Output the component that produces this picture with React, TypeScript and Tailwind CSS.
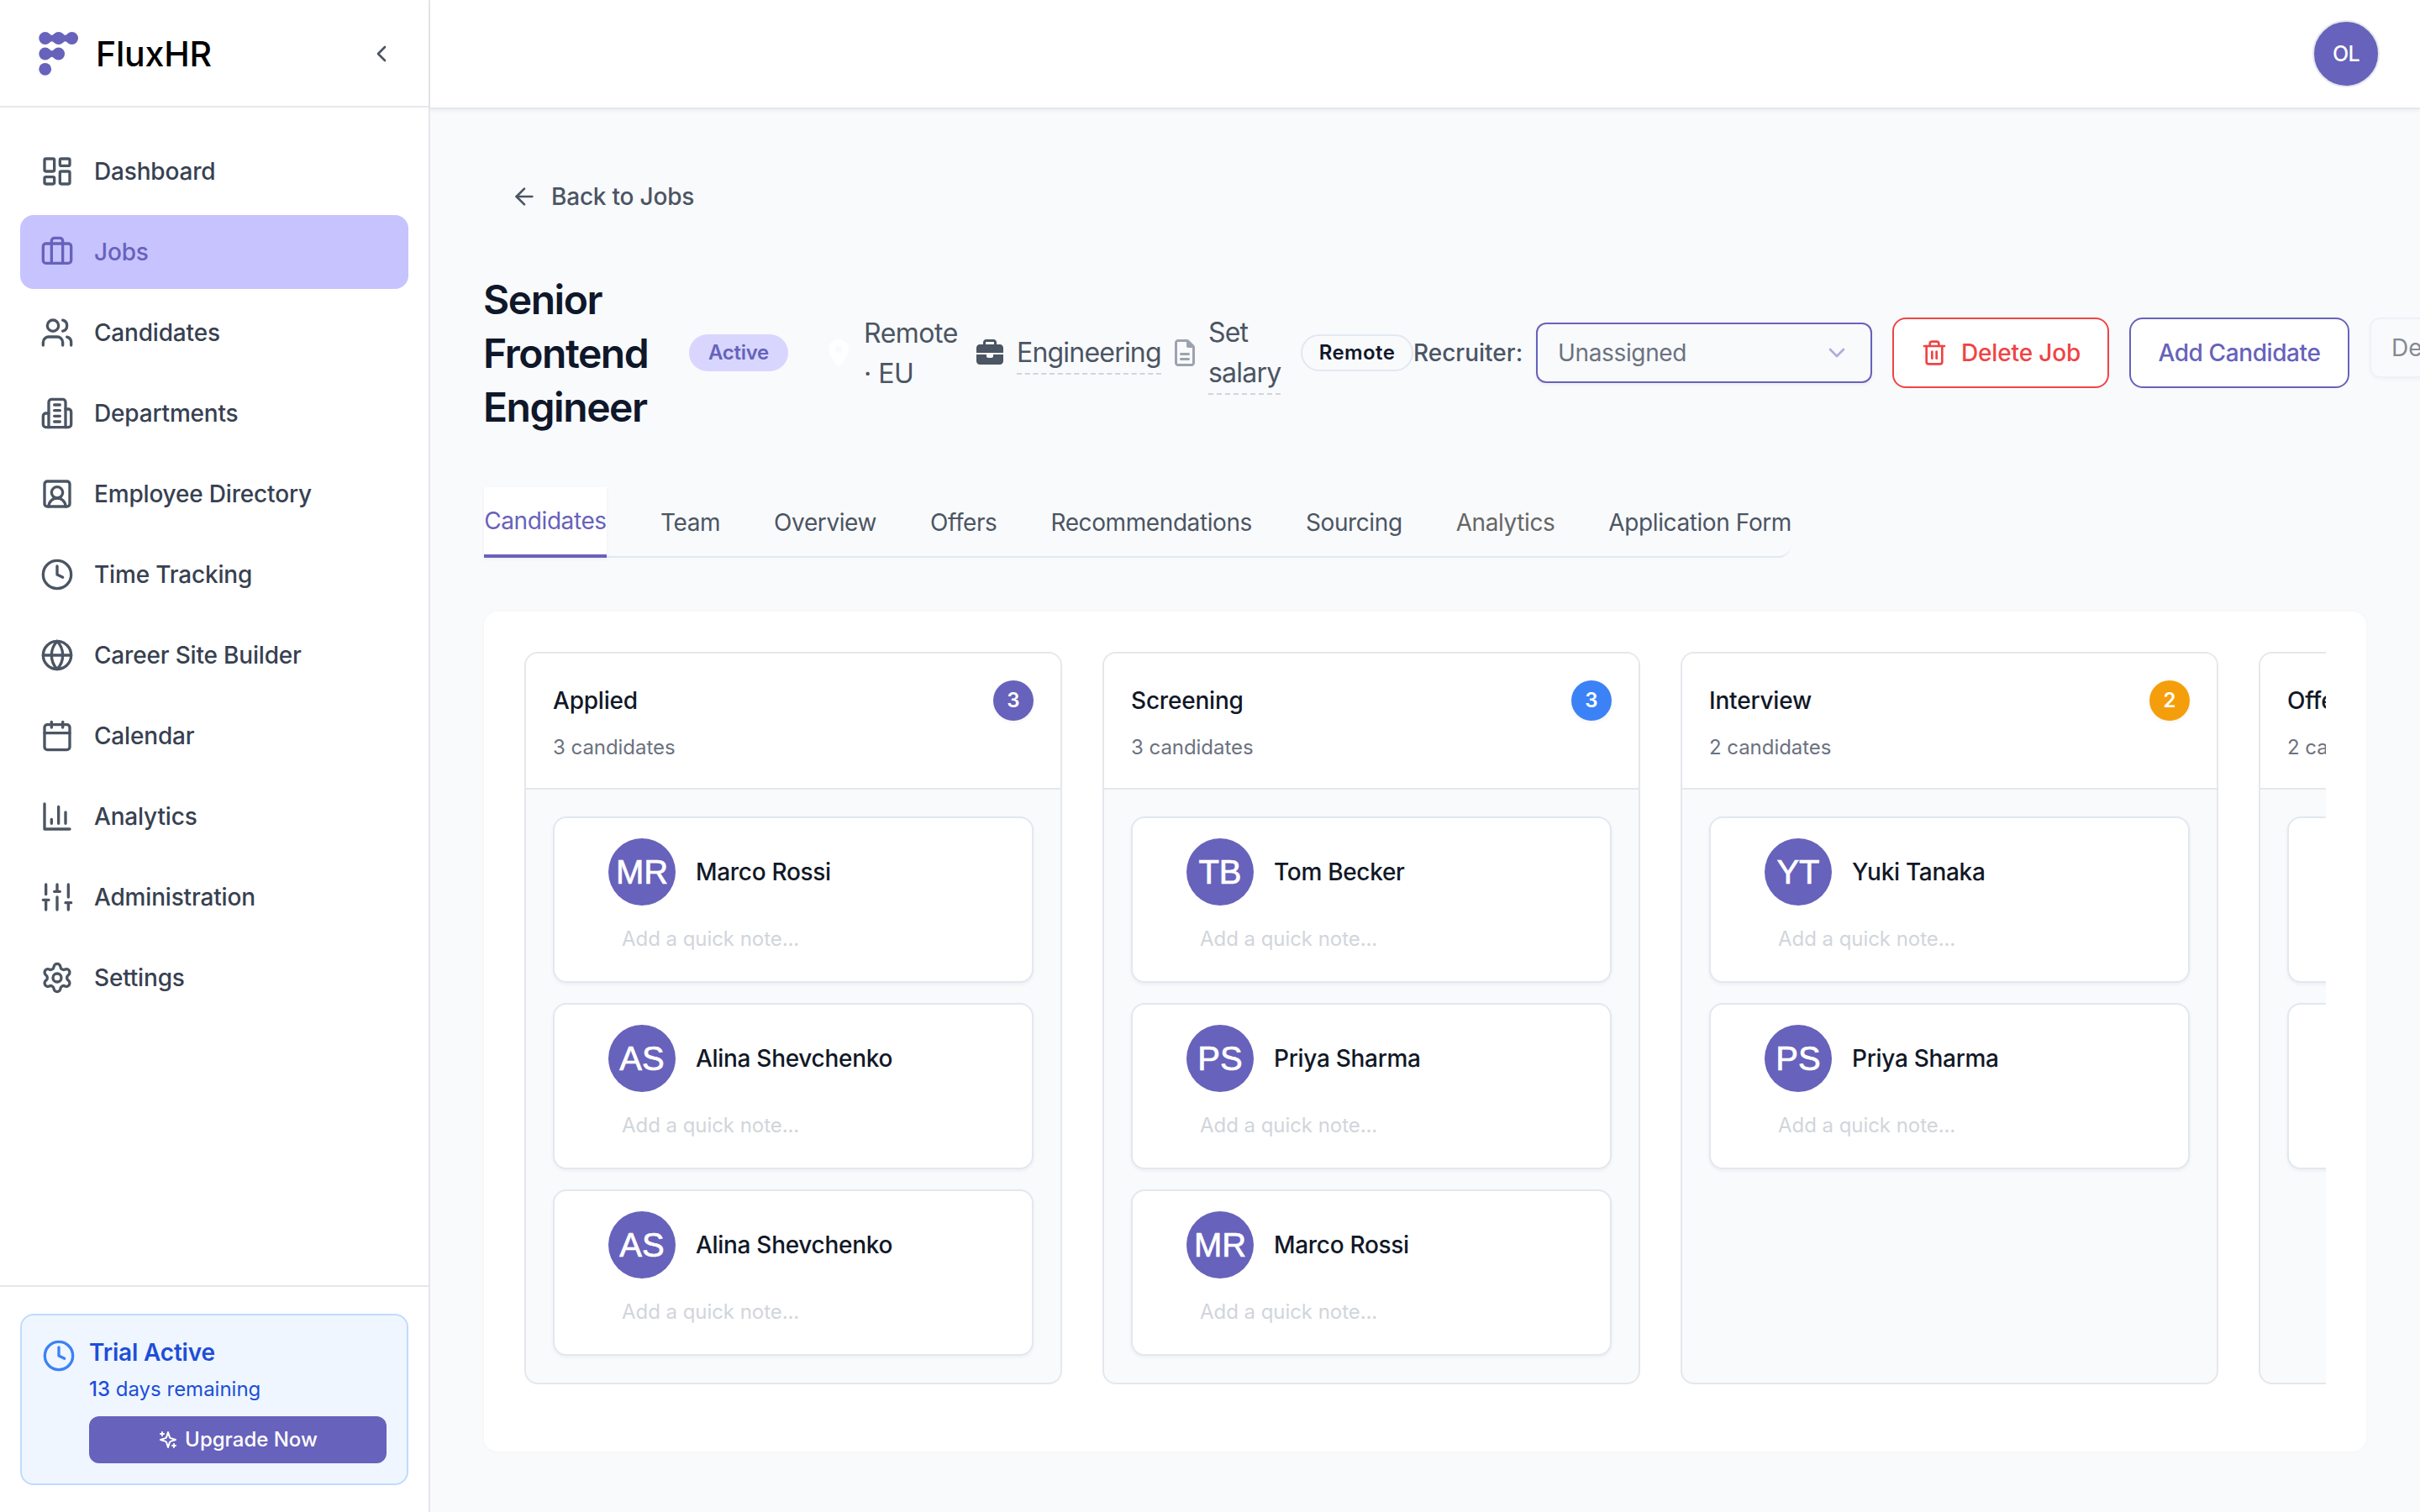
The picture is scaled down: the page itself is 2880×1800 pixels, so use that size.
import type { ReactNode } from 'react';
import {
    ArrowLeft,
    Briefcase,
    Calendar,
    ChevronDown,
    ChevronLeft,
    Clock,
    Globe,
    LayoutDashboard,
    Settings,
    SquareUserRound,
    Trash2,
    Users,
} from 'lucide-react';
import { FaBriefcase, FaLocationDot, FaRegFileLines } from 'react-icons/fa6';

const StrokeIcon = ({ className, children }: { className: string; children: ReactNode; }) => (
    <svg
        className={className}
        viewBox="0 0 24 24"
        fill="none"
        stroke="currentColor"
        strokeWidth="2"
        strokeLinecap="round"
        strokeLinejoin="round"
    >
        {children}
    </svg>
);

const BuildingIcon = ({ className }: { className: string; }) => (
    <StrokeIcon className={className}>
        <path d="M6 22V4a2 2 0 0 1 2-2h8a2 2 0 0 1 2 2v18Z" />
        <path d="M6 12H4a2 2 0 0 0-2 2v6a2 2 0 0 0 2 2h2" />
        <path d="M18 9h2a2 2 0 0 1 2 2v9a2 2 0 0 1-2 2h-2" />
        <path d="M10 6h4M10 10h4M10 14h4M10 18h4" />
    </StrokeIcon>
);

const BarChartIcon = ({ className }: { className: string; }) => (
    <StrokeIcon className={className}>
        <path d="M3 3v18h18" />
        <path d="M18 17V9M13 17V5M8 17v-3" />
    </StrokeIcon>
);

const SlidersIcon = ({ className }: { className: string; }) => (
    <StrokeIcon className={className}>
        <path d="M4 21v-7M4 10V3M12 21v-9M12 8V3M20 21v-5M20 12V3" />
        <path d="M2 14h4M10 8h4M18 16h4" />
    </StrokeIcon>
);

const SparklesIcon = ({ className }: { className: string; }) => (
    <StrokeIcon className={className}>
        <path d="m12 3-1.912 5.813a2 2 0 0 1-1.275 1.275L3 12l5.813 1.912a2 2 0 0 1 1.275 1.275L12 21l1.912-5.813a2 2 0 0 1 1.275-1.275L21 12l-5.813-1.912a2 2 0 0 1-1.275-1.275L12 3Z" />
        <path d="M5 3v4M19 17v4M3 5h4M17 19h4" />
    </StrokeIcon>
);

const Logo = () => (
    <svg className="h-[52px] w-[48px]" viewBox="0 0 48 52" fill="#6762bb">
        <circle cx="7.7" cy="7.5" r="7.4" />
        <circle cx="23.7" cy="7.5" r="7.4" />
        <circle cx="39.6" cy="7.5" r="7.4" />
        <path d="M11 1.2C14 3 14.500 3.800 15.700 3.800S17.400 3 20.400 1.200V13.800C17.400 12 16.900 11.200 15.700 11.200S14 12 11 13.800Z" />
        <path d="M27 1.2C30 3 30.500 3.800 31.700 3.800S33.400 3 36.400 1.200V13.800C33.400 12 32.900 11.200 31.700 11.200S30 12 27 13.800Z" />
        <circle cx="7.7" cy="26" r="7.4" />
        <circle cx="23.7" cy="26" r="7.4" />
        <path d="M11 19.700C14 21.500 14.500 22.300 15.700 22.300S17.400 21.500 20.400 19.700V32.300C17.400 30.500 16.900 29.700 15.700 29.700S14 30.500 11 32.300Z" />
        <circle cx="7.7" cy="44.300" r="7.4" />
    </svg>
);

const navItems = [
    { label: 'Dashboard', icon: LayoutDashboard },
    { label: 'Jobs', icon: Briefcase, active: true },
    { label: 'Candidates', icon: Users },
    { label: 'Departments', icon: BuildingIcon },
    { label: 'Employee Directory', icon: SquareUserRound },
    { label: 'Time Tracking', icon: Clock },
    { label: 'Career Site Builder', icon: Globe },
    { label: 'Calendar', icon: Calendar },
    { label: 'Analytics', icon: BarChartIcon },
    { label: 'Administration', icon: SlidersIcon },
    { label: 'Settings', icon: Settings },
];

const tabs = ['Team', 'Overview', 'Offers', 'Recommendations', 'Sourcing', 'Analytics', 'Application Form'];

const columns = [
    { title: 'Applied', badge: 'bg-[#6762bb]', people: ['Marco Rossi', 'Alina Shevchenko', 'Alina Shevchenko'] },
    { title: 'Screening', badge: 'bg-[#3b82f6]', people: ['Tom Becker', 'Priya Sharma', 'Marco Rossi'] },
    { title: 'Interview', badge: 'bg-[#f59e0b]', people: ['Yuki Tanaka', 'Priya Sharma'] },
    { title: 'Offer', badge: 'bg-[#10b981]', people: ['', ''] },
];

const Sidebar = () => (
    <aside className="flex w-[512px] shrink-0 flex-col border-r-2 border-[#e5e7eb] bg-white">
        <div className="flex h-32 items-center border-b-2 border-[#e5e7eb] pt-0.5 pr-10 pl-[46px]">
            <Logo />
            <span className="ml-5 text-[41px] leading-none font-medium tracking-[-0.2px] text-black">FluxHR</span>
            <ChevronLeft className="ml-auto size-8 text-[#4b5563]" />
        </div>
        <nav className="flex flex-1 flex-col gap-2 px-6 py-8">
            {navItems.map(({ label, icon: Icon, active }) => (
                <a
                    key={label}
                    className={`flex h-[88px] items-center gap-6 rounded-2xl px-6 ${active ? 'bg-[#c7c3ff] text-[#6762bb]' : 'text-[#374151]'}`}
                >
                    <Icon className={`size-10 ${active ? '' : 'text-[#4b5563]'}`} />
                    <span className="text-[28px] leading-10 font-medium tracking-[-0.18px]">{label}</span>
                </a>
            ))}
        </nav>
        <div className="border-t-2 border-[#e5e7eb] px-6 py-8">
            <div className="flex gap-4 rounded-2xl border-2 border-[#bfdbfe] bg-[#eff6ff] p-6">
                <Clock className="mt-1 size-10 text-[#3b82f6]" />
                <div className="flex-1 text-[#1d4ed8]">
                    <p className="text-[28px] leading-10 font-semibold tracking-[-0.18px]">Trial Active</p>
                    <p className="mt-2 text-2xl leading-8">
                        <span className="font-medium">13</span> days remaining
                    </p>
                    <button className="mt-4 flex h-14 w-full items-center justify-center gap-2 rounded-xl bg-[#6762bb] text-2xl font-medium text-white">
                        <SparklesIcon className="size-6" />
                        Upgrade Now
                    </button>
                </div>
            </div>
        </div>
    </aside>
);

const JobHeader = () => (
    <div className="mt-[50px] flex h-48 items-center text-[#4b5563]">
        <h1 className="mt-0.5 -ml-px w-[197px] shrink-0 text-5xl leading-[64px] font-semibold tracking-[-1.45px] text-[#0f172a]">
            Senior Frontend Engineer
        </h1>
        <span className="ml-12 flex h-11 w-[118px] shrink-0 items-center justify-center rounded-full bg-[#d8d6ff] text-2xl font-semibold tracking-[-0.3px] text-[#6762bb]">
            Active
        </span>
        <div className="ml-11 flex shrink-0 items-center text-[32px] leading-[48px]">
            <div className="flex w-[180px] items-center gap-3.5">
                <FaLocationDot className="size-8 shrink-0 text-white" />
                <span className="mt-0.5 w-[116px] tracking-[-0.5px]">Remote · EU</span>
            </div>
            <div className="flex items-center gap-4">
                <FaBriefcase className="size-8 shrink-0" />
                <span className="mt-0.5 w-[172px] border-b-2 border-dashed border-[#d1d5db] tracking-[-0.8px]">Engineering</span>
            </div>
            <div className="ml-3 flex items-center gap-3">
                <FaRegFileLines className="size-8 shrink-0 text-[#9ca3af]" />
                <span className="mt-0.5 w-[86px] border-b-2 border-dashed border-[#d1d5db] tracking-[-0.8px]">Set salary</span>
            </div>
        </div>
        <span className="ml-6 flex h-11 w-[134px] shrink-0 items-center justify-center rounded-full border-2 border-[#e2e8f0] text-2xl font-semibold tracking-[0.4px] text-[#0f172a]">
            Remote
        </span>
        <span className="w-[146px] shrink-0 text-[28px] font-medium">Recruiter:</span>
        <button className="flex h-[72px] w-[400px] shrink-0 items-center justify-between rounded-xl border-2 border-[#6762bb] px-6 text-[28px] tracking-[-0.35px] text-[#6b7280] shadow-[0_2px_4px_rgba(0,0,0,0.05)]">
            Unassigned
            <ChevronDown className="size-8 text-[#6762bb] opacity-50" />
        </button>
        <button className="ml-6 flex h-[84px] w-[258px] shrink-0 items-center gap-4 rounded-2xl border-2 border-[#ef4444] bg-white pl-8 text-[28px] font-medium tracking-[-0.15px] whitespace-nowrap text-[#ef4444]">
            <Trash2 className="size-8 shrink-0" />
            Delete Job
        </button>
        <button className="ml-6 h-[84px] w-[262px] shrink-0 rounded-2xl border-2 border-[#6762bb] bg-white text-[28px] font-medium tracking-[-0.4px] text-[#6762bb]">
            Add Candidate
        </button>
        <div className="-mt-3 ml-6 flex h-[72px] w-[240px] shrink-0 items-center rounded-xl border-2 border-[#eff1f7] px-6 text-[28px] text-[#858a92] shadow-[0_2px_4px_rgba(0,0,0,0.03)]">
            De
        </div>
    </div>
);

const CandidateCard = ({ name }: { name: string; }) => (
    <div className="h-[198px] rounded-2xl border-2 border-[#e2e8f0] bg-white py-6 pl-16 shadow-[0_2px_4px_rgba(0,0,0,0.05)]">
        {name && (
            <>
                <div className="flex items-center gap-6">
                    <div className="flex size-20 shrink-0 items-center justify-center rounded-full bg-[#6762bb] font-['Liberation_Sans',sans-serif] text-[40px] text-white [-webkit-text-stroke:0.7px_white]">
                        {name.split(' ').map(part => part[0]).join('')}
                    </div>
                    <span className="text-[28px] leading-10 font-medium tracking-[-0.3px] text-[#111827]">{name}</span>
                </div>
                <p className="mt-6 pl-4 text-2xl leading-8 tracking-[-0.05px] text-[#d1d5db]">Add a quick note...</p>
            </>
        )}
    </div>
);

const Board = () => (
    <div className="mt-16 h-[1000px] rounded-2xl bg-white p-12 shadow-[0_0_4px_rgba(0,0,0,0.03)]">
        <div className="flex gap-12 overflow-hidden">
            {columns.map(({ title, badge, people }) => (
                <section key={title} className="h-[872px] w-[640px] shrink-0 overflow-hidden rounded-2xl border-2 border-[#e5e7eb] bg-[#f9fafc]">
                    <header className="h-[162px] border-b-2 border-[#e5e7eb] bg-white p-8">
                        <div className="flex h-12 items-center justify-between">
                            <h3 className="text-[28px] font-medium tracking-[-0.2px] text-[#111827]">{title}</h3>
                            <span className={`flex size-12 items-center justify-center rounded-full text-2xl font-semibold text-white shadow-[0_2px_4px_rgba(0,0,0,0.05)] ${badge}`}>
                                {people.length}
                            </span>
                        </div>
                        <p className="mt-4 text-2xl leading-8 tracking-[-0.05px] text-[#6b7280]">{people.length} candidates</p>
                    </header>
                    <div className="flex flex-col gap-6 p-8">
                        {people.map((name, i) => (
                            <CandidateCard key={i} name={name} />
                        ))}
                    </div>
                </section>
            ))}
        </div>
    </div>
);

export default function App() {
    return (
        <div className="flex h-[1800px] w-[2880px] overflow-hidden bg-[#f9fafc] font-['Inter',sans-serif]">
            <Sidebar />
            <div className="flex min-w-0 flex-1 flex-col">
                <div className="flex h-[130px] shrink-0 items-center justify-end border-b-2 border-[#e5e7eb] bg-white pr-12 shadow-[0_2px_4px_rgba(0,0,0,0.05)]">
                    <div className="flex size-20 items-center justify-center rounded-full border-2 border-[#e5e7eb] bg-[#6762bb] pt-0.5 text-[25px] font-medium tracking-[-0.6px] text-white">
                        OL
                    </div>
                </div>
                <main className="flex-1 p-16">
                    <button className="flex h-20 items-center gap-4 px-8 text-[28px] font-medium tracking-[-0.2px] text-[#4b5563]">
                        <ArrowLeft className="size-8" />
                        Back to Jobs
                    </button>
                    <JobHeader />
                    <div className="mt-16 flex h-[84px] w-[1556px] items-stretch justify-between rounded-br-2xl border-b-2 border-[#e2e8f0] text-[28px] tracking-[-0.4px] whitespace-nowrap text-[#4b5563]">
                        <span className="-mb-0.5 flex w-[146px] items-center justify-center border-b-4 border-[#6762bb] bg-white text-[#6762bb] shadow-[0_2px_4px_rgba(0,0,0,0.05)]">
                            Candidates
                        </span>
                        {tabs.map(tab => (
                            <span key={tab} className={`flex items-center pt-0.5 ${tab === 'Analytics' ? 'text-[#666666]' : ''}`}>
                                {tab}
                            </span>
                        ))}
                    </div>
                    <Board />
                </main>
            </div>
        </div>
    );
}
